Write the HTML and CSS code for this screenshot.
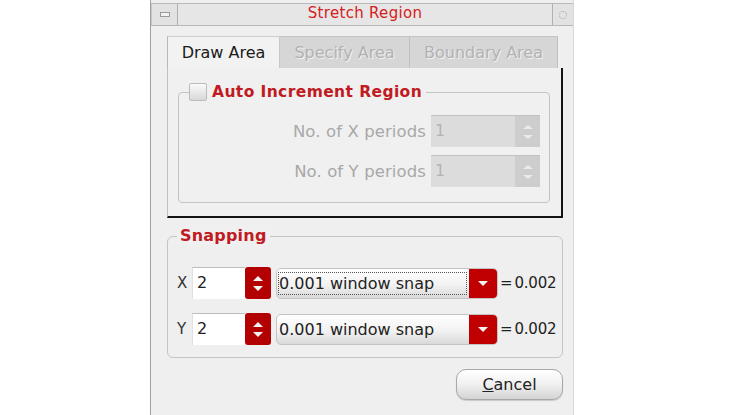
FILE: index.html
```html
<!DOCTYPE html>
<html>
<head>
<meta charset="utf-8">
<link rel="stylesheet" href="styles.css">
</head>
<body>
<div class="window">
  <div class="titlebar">
    <div class="tbtn tbtn-left"><span class="minus"></span></div>
    <div class="title">Stretch Region</div>
    <div class="tbtn tbtn-right"><span class="ring"></span></div>
  </div>
  <div class="content">
    <div class="tabbar">
      <div class="tab active">Draw Area</div>
      <div class="tab disabled t2">Specify Area</div>
      <div class="tab disabled t3">Boundary Area</div>
    </div>
    <div class="panel">
      <div class="group auto">
        <div class="legend">
          <span class="check"></span>
          <span class="legend-text">Auto Increment Region</span>
        </div>
        <div class="prow">
          <span class="plabel">No. of X periods</span>
          <div class="dspin"><span class="dval">1</span><span class="darrows"><span class="up"></span><span class="down"></span></span></div>
        </div>
        <div class="prow">
          <span class="plabel">No. of Y periods</span>
          <div class="dspin"><span class="dval">1</span><span class="darrows"><span class="up"></span><span class="down"></span></span></div>
        </div>
      </div>
    </div>
    <div class="group snap">
      <div class="legend"><span class="legend-text snaptitle">Snapping</span></div>
      <div class="srow">
        <span class="axis">X</span>
        <div class="input">2</div>
        <div class="rspin"><span class="up"></span><span class="down"></span></div>
        <div class="combo focus"><span class="ctext"><span class="focusrect">0.001 window snap</span></span><span class="carrow"><span class="down"></span></span></div>
        <span class="result">=<span class="num">0.002</span></span>
      </div>
      <div class="srow">
        <span class="axis">Y</span>
        <div class="input">2</div>
        <div class="rspin"><span class="up"></span><span class="down"></span></div>
        <div class="combo"><span class="ctext"><span class="plainrect">0.001 window snap</span></span><span class="carrow"><span class="down"></span></span></div>
        <span class="result">=<span class="num">0.002</span></span>
      </div>
    </div>
    <div class="footer">
      <button class="btn"><u>C</u>ancel</button>
    </div>
  </div>
</div>
</body>
</html>
```
FILE: styles.css
```css
html, body {
  margin: 0;
  padding: 0;
  background: #ffffff;
  height: 415px;
  overflow: hidden;
}
body {
  display: flex;
  padding-left: 150px;
  font-family: "DejaVu Sans", sans-serif;
}
.window {
  width: 422px;
  height: 415px;
  background: #efefef;
  border-left: 1px solid #a0a0a0;
  border-right: 1px solid #d8d8d8;
  display: flex;
  flex-direction: column;
}
.titlebar {
  margin-top: 3px;
  height: 23px;
  display: flex;
  border-top: 1px solid #b8b8b8;
  border-bottom: 1px solid #b8b8b8;
  background: #e6e6e6;
  box-sizing: border-box;
}
.tbtn {
  display: flex;
  align-items: center;
  justify-content: center;
  background: #e2e2e2;
}
.tbtn-left {
  width: 25px;
  border-right: 1px solid #b0b0b0;
  border-left: 1px solid #c8c8c8;
}
.tbtn-right {
  width: 20px;
  border-left: 1px solid #b0b0b0;
}
.minus {
  width: 8px;
  height: 3px;
  background: #f2f2f2;
  border: 1px solid #9a9a9a;
}
.ring {
  width: 6px;
  height: 6px;
  border-radius: 50%;
  border: 1px dotted #a8a8a8;
}
.title {
  flex: 1;
  text-align: center;
  color: #d42020;
  font-size: 15px;
  line-height: 19px;
  letter-spacing: 0.3px;
}
.content {
  padding: 10px 9px 0 16px;
  display: flex;
  flex-direction: column;
}
.tabbar {
  display: flex;
  height: 32px;
}
.tab {
  box-sizing: border-box;
  height: 32px;
  font-size: 16px;
  line-height: 32px;
  text-align: center;
  white-space: nowrap;
}
.tab.active {
  width: 113px;
  background: #f2f2f2;
  color: #1a1a1a;
  border-left: 1px solid #b8b8b8;
  border-top: 1px solid #cfcfcf;
  border-right: 1px solid #c8c8c8;
}
.tab.disabled {
  background: #d6d6d6;
  color: #b2b2b2;
  border-top: 1px solid #c4c4c4;
  border-right: 1px solid #c0c0c0;
  text-shadow: 1px 1px 0 #f0f0f0;
}
.t2 { width: 130px; }
.t3 { width: 148px; }
.panel {
  width: 396px;
  height: 150px;
  box-sizing: border-box;
  border-left: 1px solid #c0c0c0;
  border-right: 2px solid #141414;
  border-bottom: 2px solid #141414;
  background: #f0f0f0;
  padding: 14px 11px 0 10px;
}
.group {
  position: relative;
  border: 1px solid #c4c4c4;
  border-radius: 4px;
  box-sizing: border-box;
}
.legend {
  position: absolute;
  top: -11px;
  left: 10px;
  display: flex;
  align-items: center;
  background: #f0f0f0;
  padding-right: 4px;
}
.check {
  width: 16px;
  height: 16px;
  border: 1px solid #bcbcbc;
  border-radius: 2px;
  background: linear-gradient(#fafafa, #d8d8d8);
  margin-right: 5px;
}
.legend-text {
  color: #c01a22;
  font-weight: bold;
  font-size: 15.5px;
  line-height: 20px;
  letter-spacing: 0.4px;
  font-family: "DejaVu Sans", sans-serif;
}
.auto {
  height: 111px;
  margin-top: 10px;
  padding: 22px 9px 0 0;
  display: flex;
  flex-direction: column;
  gap: 8px;
}
.prow {
  display: flex;
  justify-content: flex-end;
  align-items: center;
  gap: 5px;
  height: 32px;
}
.plabel {
  color: #a8a8a8;
  font-size: 16.5px;
  letter-spacing: 0.1px;
}
.dspin {
  width: 109px;
  height: 32px;
  display: flex;
  background: #dcdcdc;
  border-top: 1px solid #c2c2c2;
  box-sizing: border-box;
}
.dval {
  flex: 1;
  color: #b4b4b4;
  font-size: 16px;
  line-height: 30px;
  padding-left: 4px;
}
.darrows {
  width: 25px;
  background: #cdcdcd;
  display: flex;
  flex-direction: column;
  align-items: center;
  justify-content: center;
  gap: 6px;
}
.up, .down {
  width: 0;
  height: 0;
  border-left: 5px solid transparent;
  border-right: 5px solid transparent;
}
.darrows .up { border-bottom: 4px solid #eaeaea; }
.darrows .down { border-top: 4px solid #eaeaea; }
.snap {
  margin-top: 18px;
  width: 396px;
  height: 122px;
  border-radius: 6px;
  padding: 30px 0 0 9px;
  display: flex;
  flex-direction: column;
  gap: 14px;
}
.snap .legend { left: 9px; top: -11px; padding: 0 3px; }
.snaptitle { letter-spacing: 0.2px; font-size: 16px; }
.srow {
  display: flex;
  align-items: center;
  height: 32px;
}
.axis {
  width: 15px;
  font-size: 15px;
  color: #333;
}
.input {
  width: 53px;
  height: 32px;
  box-sizing: border-box;
  background: #ffffff;
  border-top: 1px solid #bdbdbd;
  border-left: 1px solid #e0e0e0;
  font-size: 16px;
  line-height: 30px;
  padding-left: 4px;
  color: #222;
}
.rspin {
  width: 26px;
  height: 32px;
  background: #b30000;
  border-radius: 3px;
  display: flex;
  flex-direction: column;
  align-items: center;
  justify-content: center;
  gap: 5px;
}
.rspin .up { border-bottom: 5px solid #f4f4f4; }
.rspin .down { border-top: 5px solid #f4f4f4; }
.combo {
  margin-left: 5px;
  width: 222px;
  height: 31px;
  display: flex;
  border-radius: 5px;
  border: 1px solid #c4c4c4;
  box-sizing: border-box;
  background: linear-gradient(#ffffff, #f2f2f2 55%, #d9d9d9);
  overflow: hidden;
}
.ctext {
  flex: 1;
  display: flex;
  align-items: center;
  padding-left: 1px;
  font-size: 16px;
  color: #222;
  white-space: nowrap;
}
.focusrect, .plainrect {
  display: block;
  flex: 1;
  height: 21px;
  line-height: 21px;
  border: 1px dotted transparent;
  margin-right: 2px;
}
.focusrect { border-color: #555; }
.carrow {
  width: 28px;
  background: #c00000;
  display: flex;
  align-items: center;
  justify-content: center;
}
.carrow .down { border-top: 5px solid #f4f4f4; }
.result {
  margin-left: 2px;
  font-size: 15px;
  color: #222;
  letter-spacing: -0.2px;
}
.num { margin-left: 2px; }
.footer {
  display: flex;
  justify-content: flex-end;
  padding-top: 11px;
  padding-right: 1px;
}
.btn {
  width: 107px;
  height: 31px;
  border-radius: 10px;
  border: 1px solid #a8a8a8;
  background: linear-gradient(#ffffff, #f0f0f0 50%, #d4d4d4);
  font-family: "DejaVu Sans", sans-serif;
  font-size: 16px;
  color: #222;
  box-shadow: 0 1px 1px #c8c8c8;
}
```
